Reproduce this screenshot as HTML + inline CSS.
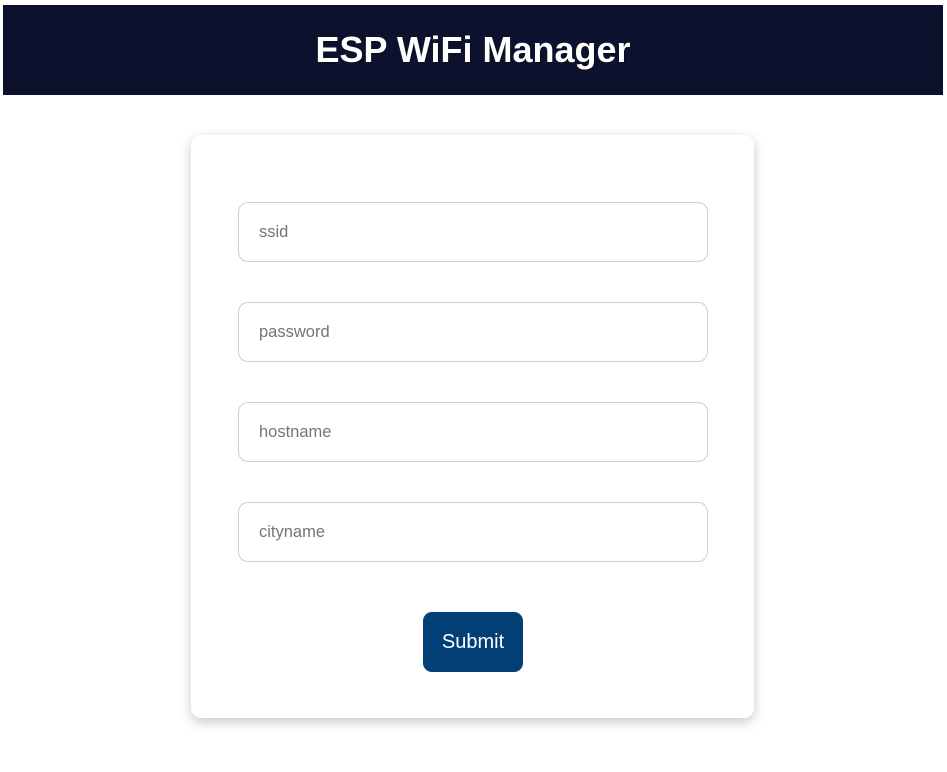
<!DOCTYPE html>
<html><head><meta charset="utf-8"><style>
body{margin:0;background:#fff;font-family:"Liberation Sans",Arial,sans-serif;width:947px;height:772px;position:relative;overflow:hidden}
.hdr{position:absolute;left:3px;top:5px;width:940px;height:90px;background:#0c122d;color:#fff;font-weight:bold;font-size:36px;text-align:center;line-height:90px;text-shadow:1px 1px 0 rgba(0,0,0,.4)}
.card{position:absolute;left:191px;top:135px;width:563px;height:583px;background:#fff;border-radius:10px;box-shadow:0 4px 12px rgba(0,0,0,.22)}
.in{position:absolute;left:47px;height:58px;border:1px solid #cfcfcf;border-radius:10px;font-size:16.5px;color:#757575;line-height:58px;padding-left:20px;width:448px}
.btn{position:absolute;left:232px;top:477px;width:100px;height:60px;background:#033f77;border-radius:9px;color:#fff;font-size:20px;text-align:center;line-height:60px}
</style></head><body>
<div class="hdr">ESP WiFi Manager</div>
<div class="card">
<div class="in" style="top:67px">ssid</div>
<div class="in" style="top:167px">password</div>
<div class="in" style="top:267px">hostname</div>
<div class="in" style="top:367px">cityname</div>
<div class="btn">Submit</div>
</div>
</body></html>
